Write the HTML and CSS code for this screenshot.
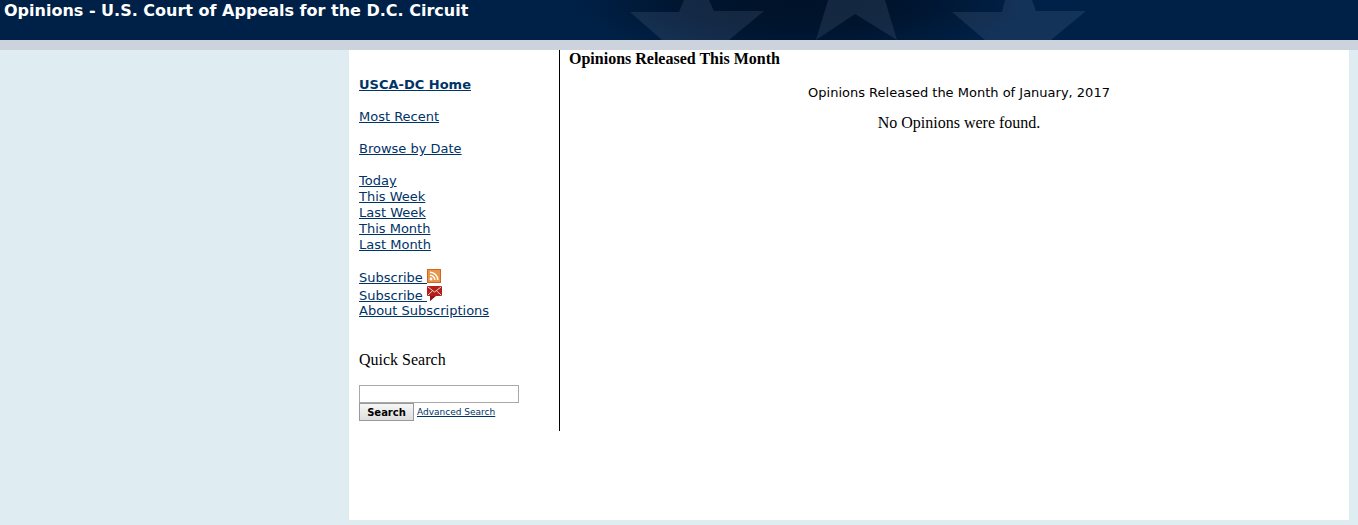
FILE: index.html
```html
<!DOCTYPE html>
<html lang="en">
<head>
  <meta charset="utf-8">
  <title>Opinions - U.S. Court of Appeals for the D.C. Circuit</title>
  <link rel="stylesheet" href="styles.css">
</head>
<body>

  <header class="banner">
    <svg class="banner-stars" width="600" height="40" viewBox="540 0 600 40" aria-hidden="true">
      <defs>
        <radialGradient id="shade" gradientUnits="userSpaceOnUse" cx="0" cy="0" r="1" gradientTransform="translate(800 -5) scale(230 75)">
          <stop offset="0" stop-color="#001127"/>
          <stop offset="0.5" stop-color="#001127" stop-opacity="0.75"/>
          <stop offset="1" stop-color="#001127" stop-opacity="0"/>
        </radialGradient>
      </defs>
      <rect x="540" width="600" height="40" fill="url(#shade)"/>
      <g fill="#8ba5c9" fill-opacity="0.14">
        <path d="M684 0H709L714 11H764L729 40H662L630 12H679Z"/>
        <path d="M828 0H885L897 40L855 14L816 40Z"/>
        <path d="M1005 0H1032L1036 11H1086L1051 40H985L952 12H1002Z"/>
      </g>
    </svg>
    <h1>Opinions - U.S. Court of Appeals for the D.C. Circuit</h1>
  </header>

  <div class="page">
    <nav class="sidebar">
      <p><a class="home" href="#">USCA-DC Home</a></p>
      <p><a href="#">Most Recent</a></p>
      <p><a href="#">Browse by Date</a></p>
      <ul>
        <li><a href="#">Today</a></li>
        <li><a href="#">This Week</a></li>
        <li><a href="#">Last Week</a></li>
        <li><a href="#">This Month</a></li>
        <li><a href="#">Last Month</a></li>
      </ul>
      <ul>
        <li class="feed"><a href="#">Subscribe <svg width="14" height="14" viewBox="0 0 14 14" role="img" aria-label="RSS">
          <rect width="14" height="14" fill="#d0661f"/>
          <rect x="1" y="1" width="12" height="12" fill="#e8954a"/>
          <circle cx="4" cy="10" r="1.4" fill="#fff"/>
          <path d="M3 6.2A4.8 4.8 0 0 1 7.8 11M3 3.2A7.8 7.8 0 0 1 10.8 11" fill="none" stroke="#fff" stroke-width="1.5"/>
        </svg></a></li>
        <li class="feed"><a href="#">Subscribe <svg width="15" height="15" viewBox="0 0 15 15" role="img" aria-label="Email">
          <path d="M1 0H14Q15 0 15 1V9Q15 10 14 10H8L3 15L4 10H1Q0 10 0 9V1Q0 0 1 0Z" fill="#b3201b"/>
          <path d="M9 10H3V15Z" fill="#8c1713"/>
          <path d="M1 1L7.5 6L14 1M1 9L5.5 4.8M14 9L9.5 4.8" fill="none" stroke="#f3d3d0" stroke-width="1"/>
        </svg></a></li>
        <li><a href="#">About Subscriptions</a></li>
      </ul>
      <form class="search">
        <label for="query">Quick Search</label>
        <input type="text" id="query">
        <div class="search-actions">
          <button type="submit">Search</button>
          <a href="#">Advanced Search</a>
        </div>
      </form>
    </nav>

    <main>
      <h2>Opinions Released This Month</h2>
      <p class="period">Opinions Released the Month of January, 2017</p>
      <p class="result">No Opinions were found.</p>
    </main>
  </div>

</body>
</html>
```

FILE: styles.css
```css
* {
  box-sizing: border-box;
}

body {
  display: flex;
  flex-direction: column;
  min-height: 100vh;
  margin: 0;
  padding-bottom: 5px;
  background: #dfecf2;
  color: #000;
  font-family: "Liberation Serif", "Times New Roman", serif;
  font-size: 16px;
  line-height: 18px;
}

h1, h2, p, ul {
  margin: 0;
  padding: 0;
}

a {
  color: #003366;
}

.banner {
  position: relative;
  height: 50px;
  background: #002147;
  border-bottom: 10px solid #ccd3dc;
}

.banner h1 {
  position: relative;
  padding-left: 4px;
  color: #fff;
  font-family: Verdana, "DejaVu Sans", sans-serif;
  font-size: 16px;
  line-height: 22px;
}

/* faded stars behind the title */
.banner-stars {
  position: absolute;
  top: 0;
  left: 540px;
}

.page {
  display: flex;
  flex: 1;
  align-items: flex-start;
  align-self: flex-end;
  width: 100%;
  max-width: 1000px;
  margin-right: 9px;
  background: #fff;
}

.sidebar {
  width: 211px;
  padding: 27px 10px 10px;
  border-right: 1px solid #000;
  font-family: Verdana, "DejaVu Sans", sans-serif;
  font-size: 13px;
  line-height: 16px;
}

.sidebar p,
.sidebar ul {
  margin-bottom: 16px;
}

.sidebar ul {
  list-style: none;
}

.sidebar .home {
  font-weight: bold;
}

.feed {
  height: 17px;
}

.feed svg {
  vertical-align: -1px;
}

.search {
  margin-top: 32px;
}

.search label {
  display: block;
  margin-bottom: 16px;
  font-family: "Liberation Serif", "Times New Roman", serif;
  font-size: 16px;
  line-height: 18px;
}

.search input {
  display: block;
  width: 160px;
  height: 18px;
  padding: 1px;
  border: 1px solid #a9a9a9;
}

.search-actions {
  display: flex;
  align-items: center;
  gap: 3px;
  font-size: 9px;
}

.search button {
  width: 55px;
  height: 18px;
  padding: 0;
  border: 1px solid #999;
  background: linear-gradient(#f6f6f6, #dedede);
  color: #000;
  font-family: Verdana, "DejaVu Sans", sans-serif;
  font-size: 10px;
  font-weight: bold;
}

main {
  flex: 1;
  padding-left: 9px;
}

main h2 {
  font-size: 16px;
  line-height: 18px;
}

.period {
  margin-top: 16px;
  font-family: Verdana, "DejaVu Sans", sans-serif;
  font-size: 13px;
  text-align: center;
}

.result {
  margin-top: 12px;
  text-align: center;
}
```
